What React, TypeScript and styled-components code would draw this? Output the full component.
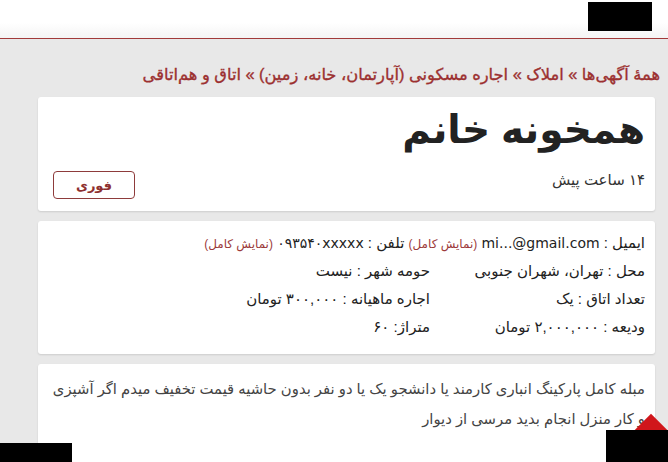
import styled, { createGlobalStyle } from "styled-components";

const Global = createGlobalStyle`
  html, body {
    margin: 0;
    padding: 0;
    background: #e8e8e8;
    font-family: "Liberation Sans", "DejaVu Sans", sans-serif;
    direction: rtl;
    overflow: hidden;
  }
`;

const Page = styled.div`
  position: relative;
  width: 668px;
  height: 462px;
  overflow: hidden;
`;

const Header = styled.div`
  height: 38px;
  background: linear-gradient(#ffffff 60%, #f4f4f4);
  border-bottom: 1px solid #a23a3a;
`;

const Main = styled.div`
  padding: 0 13px 0 38px;
`;

const Crumbs = styled.div`
  margin: 22px -5px 10px 0;
  height: 26px;
  line-height: 26px;
  font-size: 16.3px;
  -webkit-text-stroke: 0.35px #9c3030;
  color: #9c3030;
  white-space: nowrap;
`;

const Card = styled.div<{ $pad?: string }>`
  background: #fff;
  border-radius: 3px;
  box-shadow: 0 1px 2px rgba(0, 0, 0, 0.12);
  padding: ${(p) => p.$pad || "10px"};
  margin-bottom: 10px;
`;

const TopRow = styled.div`
  display: flex;
  justify-content: space-between;
  align-items: flex-start;
  height: 96px;
`;

const Title = styled.h1`
  margin: 0;
  font-size: 39px;
  line-height: 54px;
  font-weight: bold;
  color: #222;
`;

const Time = styled.div`
  margin-top: 14px;
  font-size: 15px;
  color: #333;
`;

const Urgent = styled.button`
  align-self: flex-end;
  margin: 0 0 0 5px;
  width: 82px;
  height: 28px;
  border: 1px solid #8e3b3b;
  border-radius: 4px;
  background: #fff;
  color: #8e3030;
  font-family: inherit;
  font-size: 13px;
  font-weight: bold;
`;

const Line = styled.div`
  font-size: 15px;
  line-height: 28px;
  height: 28px;
  color: #222;
  white-space: nowrap;
`;

const Latin = styled.span`
  font-family: "DejaVu Sans", sans-serif;
  font-size: 14px;
`;

const Grid = styled.div`
  display: grid;
  grid-template-columns: 215px 1fr;
`;

const More = styled.span`
  color: #9c3a3a;
  font-size: 12px;
  line-height: 1;
`;

const Desc = styled.div`
  font-size: 14.8px;
  line-height: 30px;
  color: #444;
`;

const Redact = styled.div<{ $x: number; $y: number; $w: number; $h: number }>`
  position: absolute;
  left: ${(p) => p.$x}px;
  top: ${(p) => p.$y}px;
  width: ${(p) => p.$w}px;
  height: ${(p) => p.$h}px;
  background: #000;
`;

const ToTop = styled.div`
  position: absolute;
  left: 636px;
  top: 420px;
  width: 30px;
  height: 30px;
  background: #d0161b;
  transform: rotate(45deg);
`;

export default function App() {
  return (
    <Page>
      <Global />
      <Header />
      <Main>
        <Crumbs>
          همهٔ آگهی‌ها » املاک » اجاره مسکونی (آپارتمان، خانه، زمین) » اتاق و هم‌اتاقی
        </Crumbs>
        <Card $pad="6px 10px 12px 10px">
          <TopRow>
            <div>
              <Title>همخونه خانم</Title>
              <Time>۱۴ ساعت پیش</Time>
            </div>
            <Urgent>فوری</Urgent>
          </TopRow>
        </Card>
        <Card $pad="8px 10px 13px 10px">
          <Line>
            ایمیل : <Latin>mi...@gmail.com</Latin> <More>(نمایش کامل)</More> تلفن :{" "}
            <Latin>۰۹۳۵۴۰xxxxx</Latin> <More>(نمایش کامل)</More>
          </Line>
          <Grid>
            <Line>محل : تهران، شهران جنوبی</Line>
            <Line>حومه شهر : نیست</Line>
            <Line>تعداد اتاق : یک</Line>
            <Line>اجاره ماهیانه : ۳۰۰,۰۰۰ تومان</Line>
            <Line>ودیعه : ۲,۰۰۰,۰۰۰ تومان</Line>
            <Line>متراژ: ۶۰</Line>
          </Grid>
        </Card>
        <Card $pad="10px 10px 40px 10px">
          <Desc>
            مبله کامل پارکینگ انباری کارمند یا دانشجو یک یا دو نفر بدون حاشیه قیمت تخفیف میدم اگر آشپزی
            و کار منزل انجام بدید مرسی از دیوار
          </Desc>
        </Card>
      </Main>
      <ToTop />
      <Redact $x={588} $y={2} $w={64} $h={29} />
      <Redact $x={0} $y={443} $w={72} $h={19} />
      <Redact $x={606} $y={430} $w={62} $h={32} />
    </Page>
  );
}
